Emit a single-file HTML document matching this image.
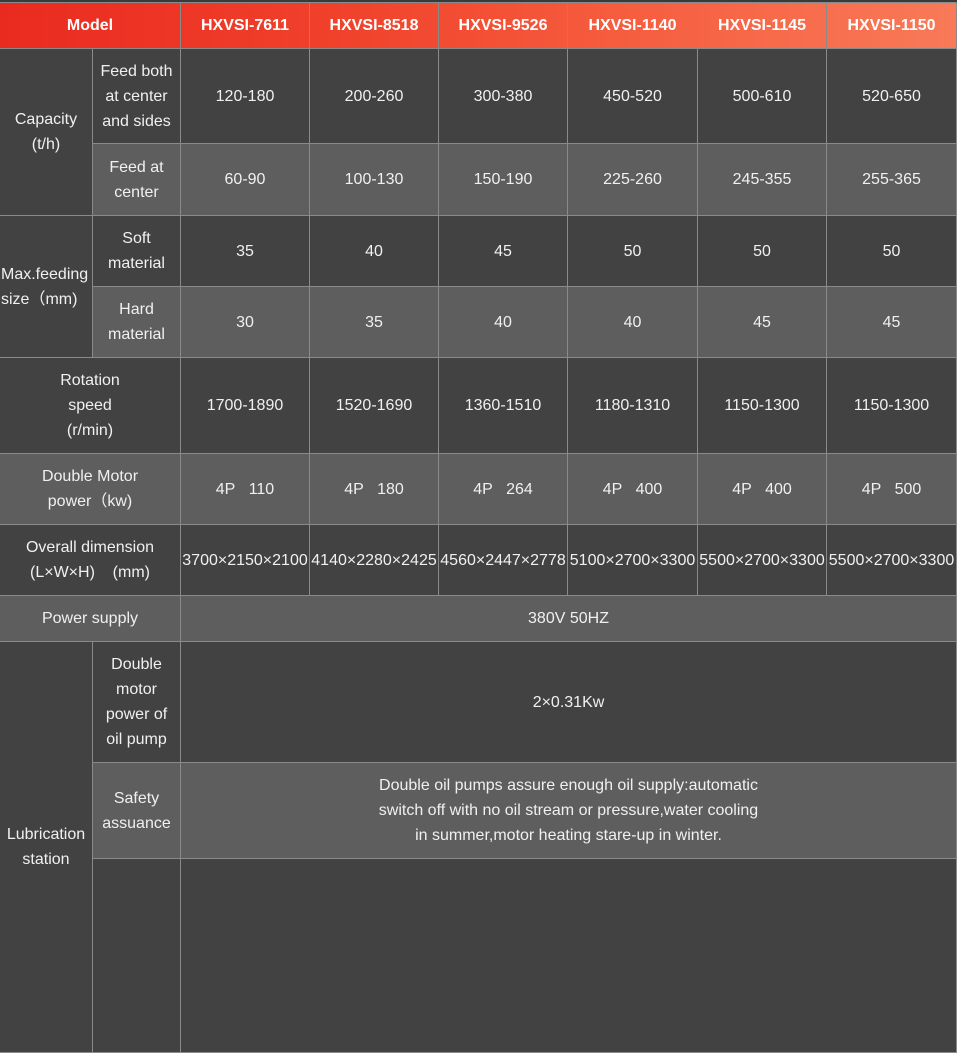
<!DOCTYPE html>
<html><head><meta charset="utf-8"><style>
html,body{margin:0;padding:0;background:#3a3a3a;overflow:hidden;width:957px;height:866px}
table{position:absolute;left:-1px;top:2px;border-collapse:collapse;table-layout:fixed;width:957px;font-family:"Liberation Sans",sans-serif;font-size:16px;color:#f0f0f0;line-height:25px}
td,th{border:1px solid #8a8a8a;text-align:center;vertical-align:middle;padding:0;white-space:nowrap}
th{color:#fff;font-weight:bold;height:45px}
thead tr{background:linear-gradient(90deg,#ea2a20 0%,#f0412b 35%,#f65d3f 65%,#f87a58 100%)}
.d td{background:#424242}
.l td{background:#5e5e5e}
</style></head><body>
<table>
<colgroup><col style="width:93px"><col style="width:88px"><col style="width:129px"><col style="width:129px"><col style="width:129px"><col style="width:130px"><col style="width:129px"><col style="width:130px"></colgroup>
<thead><tr><th colspan="2">Model</th><th>HXVSI-7611</th><th>HXVSI-8518</th><th>HXVSI-9526</th><th>HXVSI-1140</th><th>HXVSI-1145</th><th>HXVSI-1150</th></tr></thead>
<tbody>
<tr class="d" style="height:95px"><td rowspan="2">Capacity<br>(t/h)</td><td>Feed both<br>at center<br>and sides</td><td>120-180</td><td>200-260</td><td>300-380</td><td>450-520</td><td>500-610</td><td>520-650</td></tr>
<tr class="l" style="height:72px"><td>Feed at<br>center</td><td>60-90</td><td>100-130</td><td>150-190</td><td>225-260</td><td>245-355</td><td>255-365</td></tr>
<tr class="d" style="height:71px"><td rowspan="2" style="text-align:left;padding-left:1px">Max.feeding<br>size（mm)</td><td>Soft<br>material</td><td>35</td><td>40</td><td>45</td><td>50</td><td>50</td><td>50</td></tr>
<tr class="l" style="height:71px"><td>Hard<br>material</td><td>30</td><td>35</td><td>40</td><td>40</td><td>45</td><td>45</td></tr>
<tr class="d" style="height:96px"><td colspan="2">Rotation<br>speed<br>(r/min)</td><td>1700-1890</td><td>1520-1690</td><td>1360-1510</td><td>1180-1310</td><td>1150-1300</td><td>1150-1300</td></tr>
<tr class="l" style="height:71px"><td colspan="2">Double Motor<br>power（kw)</td><td>4P&nbsp;&nbsp;&nbsp;110</td><td>4P&nbsp;&nbsp;&nbsp;180</td><td>4P&nbsp;&nbsp;&nbsp;264</td><td>4P&nbsp;&nbsp;&nbsp;400</td><td>4P&nbsp;&nbsp;&nbsp;400</td><td>4P&nbsp;&nbsp;&nbsp;500</td></tr>
<tr class="d" style="height:71px"><td colspan="2">Overall dimension<br>(L×W×H)&nbsp;&nbsp;&nbsp;&nbsp;(mm)</td><td>3700×2150×2100</td><td>4140×2280×2425</td><td>4560×2447×2778</td><td>5100×2700×3300</td><td>5500×2700×3300</td><td>5500×2700×3300</td></tr>
<tr class="l" style="height:46px"><td colspan="2">Power supply</td><td colspan="6">380V 50HZ</td></tr>
<tr class="d" style="height:121px"><td rowspan="3">Lubrication<br>station</td><td>Double<br>motor<br>power of<br>oil pump</td><td colspan="6">2×0.31Kw</td></tr>
<tr class="l" style="height:96px"><td>Safety<br>assuance</td><td colspan="6">Double oil pumps assure enough oil supply:automatic<br>switch off with no oil stream or pressure,water cooling<br>in summer,motor heating stare-up in winter.</td></tr>
<tr class="d" style="height:194px"><td></td><td colspan="6"></td></tr>
</tbody></table>
</body></html>
